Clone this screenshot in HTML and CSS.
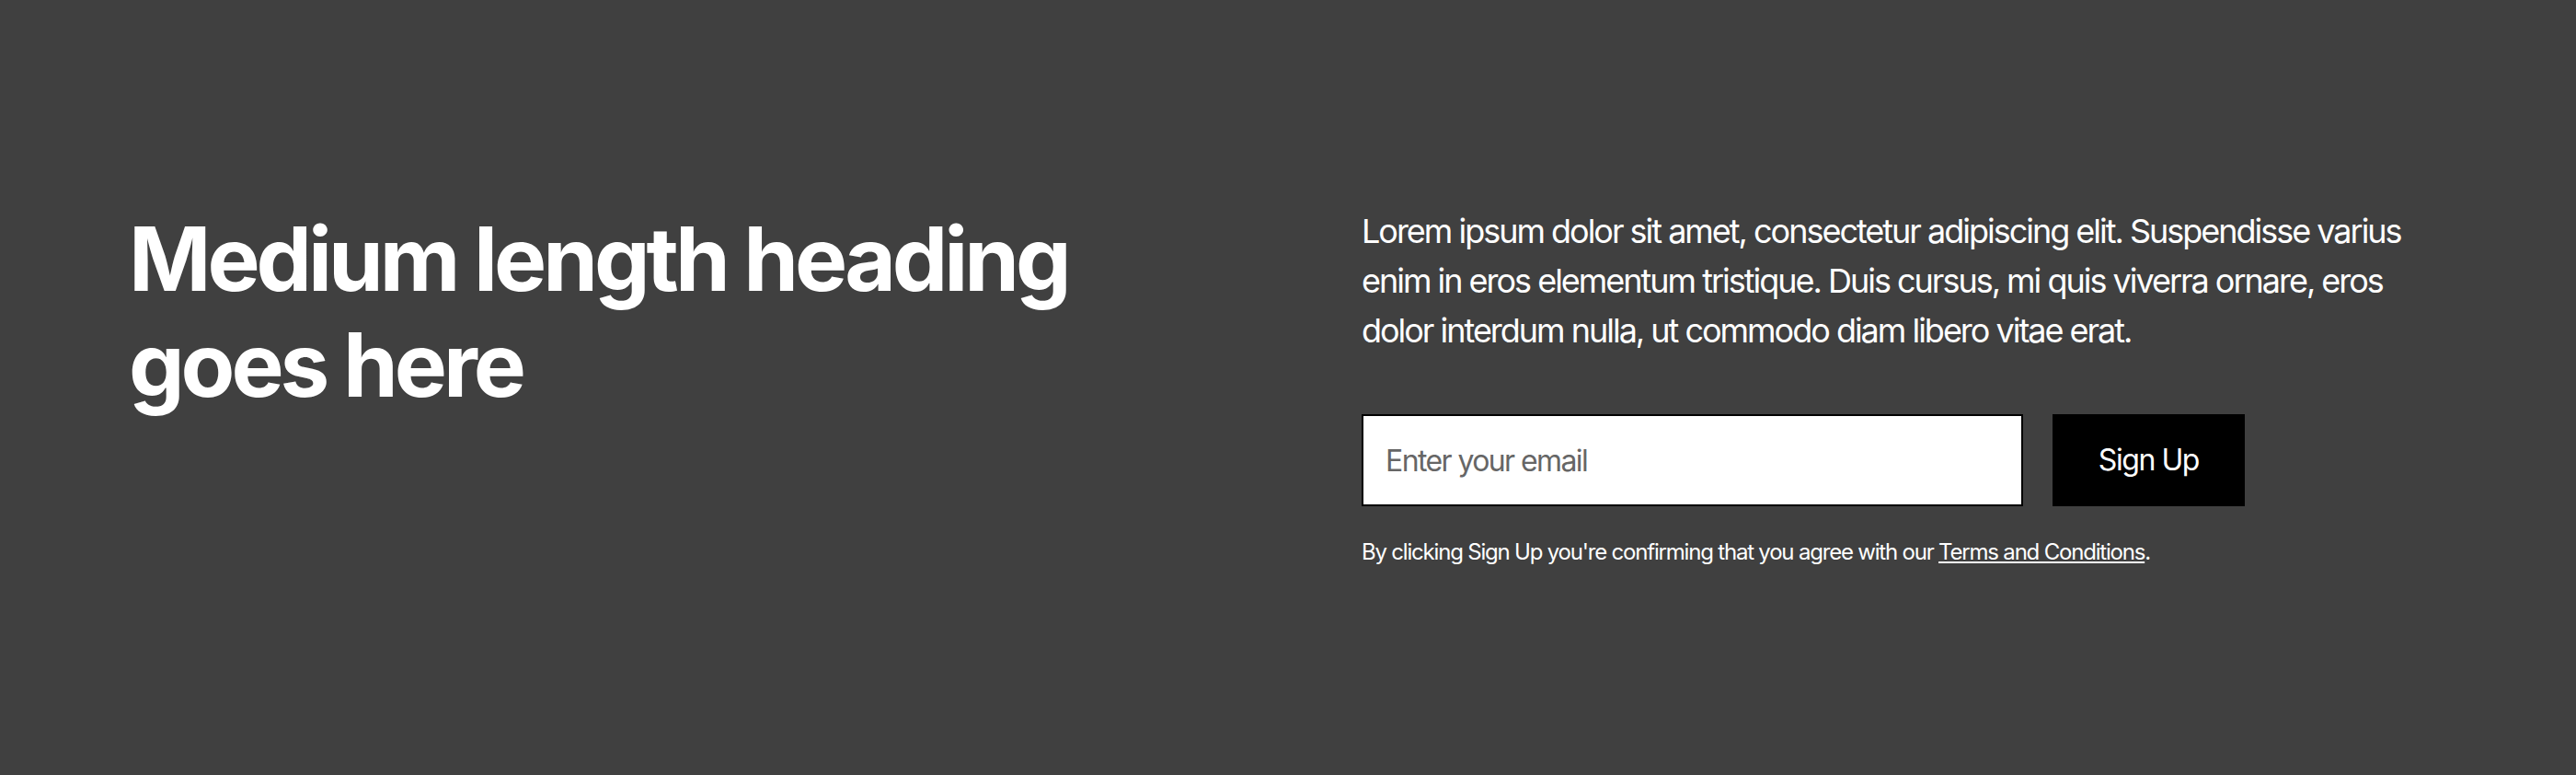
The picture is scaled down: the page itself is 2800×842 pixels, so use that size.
FILE: index.html
```html
<!DOCTYPE html>
<html lang="en">
<head>
    <meta charset="UTF-8">
    <meta name="viewport" content="width=device-width, initial-scale=1.0">
    <title>Newsletter</title>
    <link rel="stylesheet" href="styles.css">
</head>
<body>

<!-- Newsletter signup section -->
<section class="cta">
    <div class="cta-grid">
        <div class="cta-left">
            <h2 class="cta-heading">Medium length heading goes here</h2>
        </div>
        <div class="cta-right">
            <p class="cta-text">Lorem ipsum dolor sit amet, consectetur adipiscing elit. Suspendisse varius enim in eros elementum tristique. Duis cursus, mi quis viverra ornare, eros dolor interdum nulla, ut commodo diam libero vitae erat.</p>
            <form class="signup-form" onsubmit="return false;">
                <input type="email" class="email-input" placeholder="Enter your email">
                <button type="submit" class="signup-btn">Sign Up</button>
            </form>
            <p class="terms">By clicking Sign Up you're confirming that you agree with our <a href="#">Terms and Conditions</a>.</p>
        </div>
    </div>
</section>

</body>
</html>
```

FILE: styles.css
```css
body {
    margin: 0;
    font-family: 'Inter', 'Noto Sans', sans-serif;
    background-color: #404040;
    color: white;
}

/* Section */
.cta {
    padding: 224px 140px;
}

.cta-grid {
    display: grid;
    grid-template-columns: 1fr 1fr;
    column-gap: 160px;
    align-items: start;
}

.cta-heading {
    margin: 0;
    font-size: 96px;
    line-height: 1.2;
    font-weight: 700;
    letter-spacing: -0.042em;
}

.cta-text {
    margin: 0 0 64px 0;
    font-size: 36px;
    line-height: 1.5;
    letter-spacing: -0.056em;
}

/* Signup form */
.signup-form {
    display: flex;
    gap: 32px;
    max-width: 960px;
    margin-bottom: 32px;
}

.email-input {
    flex: 1;
    min-width: 0;
    height: 100px;
    box-sizing: border-box;
    padding: 0 24px;
    border: 2px solid black;
    border-radius: 0;
    background-color: white;
    font-family: inherit;
    font-size: 32px;
    letter-spacing: -0.05em;
    color: #222;
    outline: none;
}

.email-input::placeholder {
    color: #666;
}

.signup-btn {
    height: 100px;
    box-sizing: border-box;
    padding: 0 48px;
    border: 2px solid black;
    background-color: black;
    color: white;
    font-family: inherit;
    font-size: 32px;
    line-height: 1.5;
    letter-spacing: -0.045em;
    cursor: pointer;
}

.terms {
    margin: 0;
    font-size: 24px;
    line-height: 1.5;
    letter-spacing: -0.05em;
}

.terms a {
    color: white;
    text-decoration: underline;
}
```
